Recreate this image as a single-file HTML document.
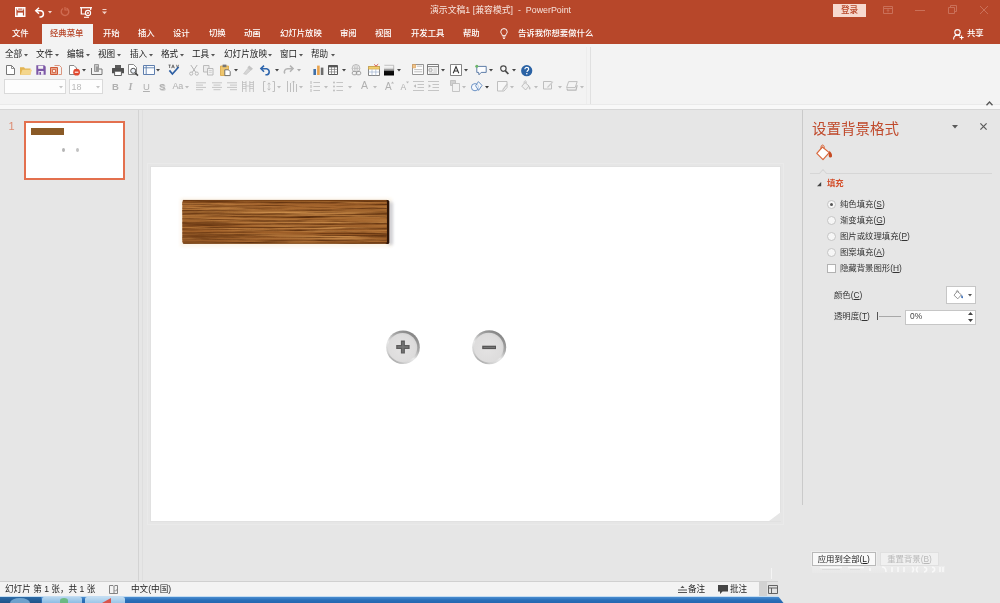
<!DOCTYPE html>
<html><head><meta charset="utf-8"><title>PowerPoint</title>
<style>
*{box-sizing:border-box;margin:0;padding:0}
html,body{width:1000px;height:603px;overflow:hidden}
body{position:relative;background:#e6e6e6;font-family:"Liberation Sans","Noto Sans CJK SC",sans-serif;font-size:8.5px;color:#333}
#root{position:absolute;left:0;top:0;width:1000px;height:603px;will-change:transform}
.abs{position:absolute}
svg{overflow:visible}
#title{left:0;top:0;width:1000px;height:44px;background:#b7472a}
.t{position:absolute;white-space:nowrap}
.tab{position:absolute;top:24px;height:20px;line-height:19px;font-size:8.4px;color:#fff;white-space:nowrap;font-weight:500}
#ribbon{left:0;top:44px;width:1000px;height:66px;background:linear-gradient(#f3f3f3 0 60.4px,#eaeaea 60.4px 61.2px,#f8f8f8 61.2px 65px);border-bottom:1px solid #d6d6d6}
.menu{position:absolute;top:49px;font-size:8.6px;line-height:11px;color:#1c1c1c;white-space:nowrap}
#left{left:0;top:110px;width:139px;height:471px;background:#e6e6e6;border-right:1px solid #d3d3d3;box-shadow:3px 0 0 -0px #e6e6e6, 4px 0 0 0 #dedede}
#slide{left:150.8px;top:166.8px;width:629.6px;height:354px;background:#fff;box-shadow:0 0 0 1px #e1e1e1, 0 0 0 3px #e6e6e6, 0 0 0 4px #eaeaea}
#rpane{left:803px;top:110px;width:197px;height:493px;background:#e6e6e6}
#status{left:0;top:581px;width:778px;height:15px;background:#f3f3f3;border-top:1px solid #d0d0d0}
#taskbar{left:0;top:596px;width:784px;height:7px;background:linear-gradient(#c4ddf2 0 1px,#4b8ed0 1px,#2a6fb9 4px,#2467b0);clip-path:polygon(0 0,778px 0,783.5px 100%,0 100%)}
.opt{position:absolute;left:840px;font-size:8.4px;line-height:11px;color:#333;white-space:nowrap}
.opt u,.lbl u,.btn u{text-decoration:underline;text-underline-offset:1px}
.radio{position:absolute;left:827px;width:9px;height:9px;border-radius:50%;border:1px solid #c4c4c4;background:#f6f6f6}
.lbl{position:absolute;font-size:8.4px;line-height:11px;color:#333;white-space:nowrap}
.btn{position:absolute;font-size:8.4px;line-height:13px;text-align:center;white-space:nowrap;border:1px solid #b4b4b4;background:#f6f6f6;color:#222}
</style></head><body>
<div id="root">
<div id="title" class="abs">
<div class="t" style="left:430px;top:5px;font-size:8.85px;line-height:11px;color:#f7e3dc">演示文稿1 [兼容模式]&nbsp; -&nbsp; PowerPoint</div>
<div class="t" style="left:833px;top:4px;width:33px;height:13px;background:#f7d9cf;color:#b7472a;font-size:8.6px;line-height:12.5px;text-align:center;font-weight:500">登录</div>
</div>
<svg class="abs" style="left:15px;top:7px" width="11" height="10" viewBox="0 0 11 10" ><path d="M0.7 0.7h9.1v8.6h-9.1z" fill="none" stroke="#fff" stroke-width="1.4"/><path d="M2.6 5.6h5.3v3.6h-5.3z" fill="#fff"/><path d="M2.6 0.7h5.3v2.4h-5.3z" fill="none" stroke="#fff" stroke-width="1"/></svg>
<svg class="abs" style="left:35px;top:7px" width="11" height="10" viewBox="0 0 11 10" ><path d="M4 0.8L0.8 3.8L4 6.8" fill="none" stroke="#fff" stroke-width="1.5"/><path d="M1 3.8h5a3.2 3.2 0 0 1 0 6.2h-1.5" fill="none" stroke="#fff" stroke-width="1.5"/></svg>
<svg class="abs" style="left:48px;top:11px" width="4" height="2.4" viewBox="0 0 4 2.4" ><path d="M0 0h4L2 2.4z" fill="#f3d7cf"/></svg>
<svg class="abs" style="left:60px;top:7px" width="10" height="10" viewBox="0 0 10 10" ><path d="M6.5 1.2a3.8 3.8 0 1 1-3.6 0.3" fill="none" stroke="#cf6c52" stroke-width="1.4"/><path d="M5 0v3h3" fill="none" stroke="#cf6c52" stroke-width="1.2"/></svg>
<svg class="abs" style="left:80px;top:7px" width="12" height="11" viewBox="0 0 12 11" ><path d="M0 0.7h12" stroke="#fff" stroke-width="1.3"/><path d="M1.3 1v6h5" fill="none" stroke="#fff" stroke-width="1.2"/><path d="M10.7 1v2" stroke="#fff" stroke-width="1.2"/><circle cx="8" cy="6" r="2.6" fill="none" stroke="#fff" stroke-width="1.1"/><circle cx="8" cy="6" r="0.9" fill="#fff"/><path d="M4 10.3h5" stroke="#fff" stroke-width="1.1"/></svg>
<svg class="abs" style="left:102px;top:9px" width="5" height="6" viewBox="0 0 5 6" ><path d="M0.5 0.5h4" stroke="#f0cfc5" stroke-width="1"/><path d="M0 2.5h5L2.5 5.2z" fill="#f0cfc5"/></svg>
<svg class="abs" style="left:883px;top:6px" width="10" height="8" viewBox="0 0 10 8" ><path d="M0.5 0.5h9v7h-9z M0.5 2.5h9" fill="none" stroke="#ca7059" stroke-width="1"/><path d="M5 3.5v3M3.8 5L5 3.6L6.2 5" fill="none" stroke="#ca7059" stroke-width="0.8"/></svg>
<svg class="abs" style="left:915px;top:10px" width="10" height="1" viewBox="0 0 10 1" ><path d="M0 0.5h10" stroke="#ca7059" stroke-width="1"/></svg>
<svg class="abs" style="left:948px;top:5px" width="9" height="9" viewBox="0 0 9 9" ><path d="M0.5 2.5h6v6h-6z" fill="none" stroke="#ca7059" stroke-width="1"/><path d="M2.5 2.5v-2h6v6h-2" fill="none" stroke="#ca7059" stroke-width="1"/></svg>
<svg class="abs" style="left:980px;top:6px" width="8" height="8" viewBox="0 0 8 8" ><path d="M0 0L8 8M8 0L0 8" stroke="#ca7059" stroke-width="1"/></svg>
<div class="abs" style="left:42px;top:24px;width:51px;height:20px;background:#f3f3f3"></div>
<div class="tab" style="left:12px">文件</div>
<div class="tab" style="left:50px;color:#b7472a">经典菜单</div>
<div class="tab" style="left:103px">开始</div>
<div class="tab" style="left:138px">插入</div>
<div class="tab" style="left:173px">设计</div>
<div class="tab" style="left:209px">切换</div>
<div class="tab" style="left:244px">动画</div>
<div class="tab" style="left:280px">幻灯片放映</div>
<div class="tab" style="left:340px">审阅</div>
<div class="tab" style="left:375px">视图</div>
<div class="tab" style="left:411px">开发工具</div>
<div class="tab" style="left:463px">帮助</div>
<div class="tab" style="left:518px">告诉我你想要做什么</div>
<svg class="abs" style="left:500px;top:28px" width="8" height="11" viewBox="0 0 8 11" ><path d="M4 0.6a3.2 3.2 0 0 1 3.2 3.2c0 1.6-1.4 2.3-1.6 3.9h-3.2c-0.2-1.6-1.6-2.3-1.6-3.9a3.2 3.2 0 0 1 3.2-3.2z" fill="none" stroke="#fff" stroke-width="1"/><path d="M2.6 9h2.8M3 10.4h2" stroke="#fff" stroke-width="0.9"/></svg>
<svg class="abs" style="left:953px;top:29px" width="11" height="11" viewBox="0 0 11 11" ><circle cx="4.5" cy="3.3" r="2.7" fill="none" stroke="#fff" stroke-width="1.1"/><path d="M0.6 10.5c0-3 1.6-4.4 3.9-4.4c1.2 0 2 0.4 2.6 1" fill="none" stroke="#fff" stroke-width="1.1"/><path d="M8.6 6.5v4M6.6 8.5h4" stroke="#fff" stroke-width="1.1"/></svg>
<div class="tab" style="left:967px">共享</div>
<div id="ribbon" class="abs"></div>
<div class="menu" style="left:5px">全部</div>
<svg class="abs" style="left:24px;top:54px" width="4" height="2.4" viewBox="0 0 4 2.4" ><path d="M0 0h4L2 2.4z" fill="#555"/></svg>
<div class="menu" style="left:36px">文件</div>
<svg class="abs" style="left:55px;top:54px" width="4" height="2.4" viewBox="0 0 4 2.4" ><path d="M0 0h4L2 2.4z" fill="#555"/></svg>
<div class="menu" style="left:67px">编辑</div>
<svg class="abs" style="left:86px;top:54px" width="4" height="2.4" viewBox="0 0 4 2.4" ><path d="M0 0h4L2 2.4z" fill="#555"/></svg>
<div class="menu" style="left:98px">视图</div>
<svg class="abs" style="left:117px;top:54px" width="4" height="2.4" viewBox="0 0 4 2.4" ><path d="M0 0h4L2 2.4z" fill="#555"/></svg>
<div class="menu" style="left:130px">插入</div>
<svg class="abs" style="left:149px;top:54px" width="4" height="2.4" viewBox="0 0 4 2.4" ><path d="M0 0h4L2 2.4z" fill="#555"/></svg>
<div class="menu" style="left:161px">格式</div>
<svg class="abs" style="left:180px;top:54px" width="4" height="2.4" viewBox="0 0 4 2.4" ><path d="M0 0h4L2 2.4z" fill="#555"/></svg>
<div class="menu" style="left:192px">工具</div>
<svg class="abs" style="left:211px;top:54px" width="4" height="2.4" viewBox="0 0 4 2.4" ><path d="M0 0h4L2 2.4z" fill="#555"/></svg>
<div class="menu" style="left:224px">幻灯片放映</div>
<svg class="abs" style="left:268px;top:54px" width="4" height="2.4" viewBox="0 0 4 2.4" ><path d="M0 0h4L2 2.4z" fill="#555"/></svg>
<div class="menu" style="left:280px">窗口</div>
<svg class="abs" style="left:299px;top:54px" width="4" height="2.4" viewBox="0 0 4 2.4" ><path d="M0 0h4L2 2.4z" fill="#555"/></svg>
<div class="menu" style="left:311px">帮助</div>
<svg class="abs" style="left:331px;top:54px" width="4" height="2.4" viewBox="0 0 4 2.4" ><path d="M0 0h4L2 2.4z" fill="#555"/></svg>
<div class="abs" style="left:590px;top:47px;width:1px;height:57px;background:#e0e0e0"></div><div class="abs" style="left:586px;top:47px;width:1px;height:57px;background:#ededed"></div>
<svg class="abs" style="left:986px;top:101px" width="7" height="5" viewBox="0 0 7 5" ><path d="M0.5 4.2L3.5 1L6.5 4.2" fill="none" stroke="#555" stroke-width="1.3"/></svg>
<svg class="abs" style="left:6px;top:65px" width="9" height="10" viewBox="0 0 9 10"><path d="M0.5 0.5h5l3 3v6h-8z" fill="#fff" stroke="#777" stroke-width="1"/><path d="M5.5 0.5v3h3" fill="none" stroke="#777" stroke-width="0.8"/></svg>
<svg class="abs" style="left:20px;top:66px" width="12" height="9" viewBox="0 0 12 9"><path d="M0 1.2h4l1 1.2h5.5v6.4h-10.5z" fill="#e3b452"/><path d="M0.6 8.8l1.8-5h9.6l-1.8 5z" fill="#f4d68c"/></svg>
<svg class="abs" style="left:36px;top:65px" width="10" height="10" viewBox="0 0 10 10"><path d="M0.3 0.3h8l1.4 1.4v8h-9.4z" fill="#7c57a6"/><path d="M2.2 0.8h5v3h-5z" fill="#f3f3f3"/><path d="M2.4 6h5.2v3.8h-5.2z" fill="#efeaf5"/><path d="M3.4 7h1.6v2.8h-1.6z" fill="#7c57a6"/></svg>
<svg class="abs" style="left:50px;top:65px" width="12" height="10" viewBox="0 0 12 10"><path d="M0.5 2.5h7v7h-7z" fill="#e9a58c" stroke="#cf5a37" stroke-width="1"/><path d="M2.5 4.5h3v3h-3z" fill="#fbe9e2" stroke="#cf5a37" stroke-width="0.8"/><path d="M4.5 0.5h5l2 2v7h-3" fill="none" stroke="#d78a72" stroke-width="0.9"/></svg>
<svg class="abs" style="left:69px;top:65px" width="12" height="11" viewBox="0 0 12 11"><path d="M0.5 0.5h4.5l2.5 2.5v6.5h-7z" fill="#fff" stroke="#888" stroke-width="1"/><circle cx="7.6" cy="7.2" r="3.4" fill="#e0492f"/><path d="M5.8 7.2h3.6" stroke="#fff" stroke-width="1.1"/></svg>
<svg class="abs" style="left:82px;top:69px" width="4" height="2.4" viewBox="0 0 4 2.4"><path d="M0 0h4L2 2.4z" fill="#444"/></svg>
<svg class="abs" style="left:91px;top:64px" width="12" height="11" viewBox="0 0 12 11"><path d="M3.5 0.5h4v7h-4z" fill="#c9c9c9" stroke="#8a8a8a" stroke-width="0.8"/><path d="M0.5 4v6.5h10.5v-5.5h-3" fill="none" stroke="#777" stroke-width="1"/><path d="M5 2.5h2.6v5h-2.6z" fill="#9a9a9a"/></svg>
<svg class="abs" style="left:112px;top:65px" width="12" height="11" viewBox="0 0 12 11"><path d="M3 0h6v3h-6z" fill="#5c5c5c"/><path d="M0.3 3h11.4a0.8 0.8 0 0 1 0.3 0.6v4.6h-12v-4.6a0.8 0.8 0 0 1 0.3-0.6z" fill="#505050"/><path d="M2.6 6.2h6.8v4.3h-6.8z" fill="#fff" stroke="#505050" stroke-width="0.9"/></svg>
<svg class="abs" style="left:128px;top:64px" width="11" height="12" viewBox="0 0 11 12"><path d="M0.5 0.5h5l3 3v7h-8z" fill="#fff" stroke="#7a7a7a" stroke-width="0.9"/><circle cx="5.2" cy="6.8" r="2.5" fill="#eef3fa" stroke="#555" stroke-width="1"/><path d="M7 8.8l3 2.8" stroke="#444" stroke-width="1.5"/></svg>
<svg class="abs" style="left:143px;top:65px" width="12" height="10" viewBox="0 0 12 10"><path d="M0.5 0.5h11v9h-11z" fill="#fafcff" stroke="#5f7fae" stroke-width="1"/><path d="M0.5 2.8h11M3.2 0.5v9" stroke="#5f7fae" stroke-width="0.9"/></svg>
<svg class="abs" style="left:156px;top:69px" width="4" height="2.4" viewBox="0 0 4 2.4"><path d="M0 0h4L2 2.4z" fill="#444"/></svg>
<svg class="abs" style="left:168px;top:64px" width="12" height="12" viewBox="0 0 12 12"><path d="M0.5 1h2.2M1.6 1v3M5 0.8l-1.4 3.4M5 0.8l1.4 3.4M4.2 3h1.8" fill="none" stroke="#555" stroke-width="0.8"/><path d="M8.5 0.8l1 3.4l1-3.4" fill="none" stroke="#555" stroke-width="0.8"/><path d="M1.4 6.4l3 3.6l6.2-7" fill="none" stroke="#2d5fa3" stroke-width="1.7"/></svg>
<svg class="abs" style="left:189px;top:65px" width="10" height="11" viewBox="0 0 10 11"><path d="M1.8 0l5 7.4M8.2 0l-5 7.4" stroke="#b4b4b4" stroke-width="1"/><circle cx="2.2" cy="8.6" r="1.6" fill="none" stroke="#b4b4b4" stroke-width="0.9"/><circle cx="7.8" cy="8.6" r="1.6" fill="none" stroke="#b4b4b4" stroke-width="0.9"/></svg>
<svg class="abs" style="left:203px;top:65px" width="11" height="11" viewBox="0 0 11 11"><path d="M0.5 0.5h5.5v6.5h-5.5z" fill="#ececec" stroke="#b4b4b4" stroke-width="0.9"/><path d="M4.5 3.5h5.5v6.5h-5.5z" fill="#f2f2f2" stroke="#b4b4b4" stroke-width="0.9"/><path d="M5.8 5.5h3M5.8 7.3h3" stroke="#c2c2c2" stroke-width="0.7"/></svg>
<svg class="abs" style="left:220px;top:64px" width="11" height="12" viewBox="0 0 11 12"><path d="M0.5 2h8v9.5h-8z" fill="#efc66d" stroke="#d9a441" stroke-width="0.8"/><path d="M2.6 0.6h3.8v2.6h-3.8z" fill="#777"/><path d="M4.8 5.8h3.6l1.8 1.8v4h-5.4z" fill="#fff" stroke="#666" stroke-width="0.9"/></svg>
<svg class="abs" style="left:234px;top:69px" width="4" height="2.4" viewBox="0 0 4 2.4"><path d="M0 0h4L2 2.4z" fill="#444"/></svg>
<svg class="abs" style="left:243px;top:65px" width="11" height="10" viewBox="0 0 11 10"><path d="M6.2 0.6l3.8 3.2l-2 1.6l-3.6-3z" fill="#c4c4c4"/><path d="M5 3.2l2.6 2.2l-4.4 4l-2.6-0.6z" fill="#d6d6d6" stroke="#c0c0c0" stroke-width="0.6"/></svg>
<svg class="abs" style="left:260px;top:65px" width="12" height="10" viewBox="0 0 12 10"><path d="M4 0.6L0.9 3.6L4 6.8" fill="none" stroke="#2f66ad" stroke-width="1.6"/><path d="M1.2 3.7h5.4a3.2 3.2 0 0 1 0.6 6.1h-1.8" fill="none" stroke="#2f66ad" stroke-width="1.6"/></svg>
<svg class="abs" style="left:275px;top:69px" width="4" height="2.4" viewBox="0 0 4 2.4"><path d="M0 0h4L2 2.4z" fill="#444"/></svg>
<svg class="abs" style="left:283px;top:65px" width="11" height="10" viewBox="0 0 11 10"><path d="M7 0.6L10.1 3.6L7 6.8" fill="none" stroke="#b4b4b4" stroke-width="1.5"/><path d="M9.8 3.7h-5a3.2 3.2 0 0 0-3 4.8" fill="none" stroke="#b4b4b4" stroke-width="1.5"/></svg>
<svg class="abs" style="left:297px;top:69px" width="4" height="2.4" viewBox="0 0 4 2.4"><path d="M0 0h4L2 2.4z" fill="#aaa"/></svg>
<svg class="abs" style="left:313px;top:65px" width="11" height="10" viewBox="0 0 11 10"><path d="M0.4 4h2.6v6h-2.6z" fill="#3f6fa8"/><path d="M4.1 0.6h2.6v9.4h-2.6z" fill="#e8a24c"/><path d="M7.8 2.6h2.6v7.4h-2.6z" fill="#6d6d6d"/></svg>
<svg class="abs" style="left:328px;top:65px" width="10" height="10" viewBox="0 0 10 10"><path d="M0.5 0.5h9v9h-9z" fill="#fff" stroke="#555" stroke-width="1"/><path d="M0.5 1.5h9" stroke="#555" stroke-width="1.8"/><path d="M0.5 4.4h9M0.5 6.9h9M3.5 2v7.5M6.5 2v7.5" stroke="#777" stroke-width="0.7"/></svg>
<svg class="abs" style="left:341.5px;top:69px" width="4" height="2.4" viewBox="0 0 4 2.4"><path d="M0 0h4L2 2.4z" fill="#444"/></svg>
<svg class="abs" style="left:351px;top:64px" width="11" height="12" viewBox="0 0 11 12"><circle cx="5" cy="4.4" r="3.9" fill="#f0f0f0" stroke="#b4b4b4" stroke-width="0.9"/><path d="M1.2 4.4h7.6M5 0.5v7.8M2.8 1.4c1.2 2 1.2 4 0 6M7.2 1.4c-1.2 2-1.2 4 0 6" fill="none" stroke="#b4b4b4" stroke-width="0.6"/><rect x="1.2" y="7.4" width="4.6" height="3.4" rx="1.6" fill="#f3f3f3" stroke="#999" stroke-width="0.9"/><rect x="5.2" y="7.4" width="4.6" height="3.4" rx="1.6" fill="none" stroke="#999" stroke-width="0.9"/></svg>
<svg class="abs" style="left:368px;top:64px" width="12" height="12" viewBox="0 0 12 12"><path d="M0.5 2.5h11v9h-11z" fill="#fff" stroke="#777" stroke-width="0.9"/><path d="M0.5 2.5h11v2.6h-11z" fill="#f2cf6e" stroke="#d1a33a" stroke-width="0.6"/><path d="M0.5 8h11M4 5.2v6.3M7.8 5.2v6.3" stroke="#9db3cf" stroke-width="0.7"/><path d="M6.2 0.4l1.8 1.8l2.2-2" fill="none" stroke="#d9534a" stroke-width="1"/></svg>
<svg class="abs" style="left:384px;top:64.5px" width="10" height="10.5" viewBox="0 0 10 10.5"><defs><linearGradient id="bw" x1="0" y1="0" x2="0" y2="1"><stop offset="0" stop-color="#fff"/><stop offset="0.3" stop-color="#e6e6e6"/><stop offset="0.5" stop-color="#777"/><stop offset="0.62" stop-color="#111"/><stop offset="1" stop-color="#000"/></linearGradient></defs><path d="M0 0h10v10.5h-10z" fill="url(#bw)"/><path d="M0.3 0.3h9.4v5h-9.4" fill="none" stroke="#999" stroke-width="0.6"/></svg>
<svg class="abs" style="left:397px;top:69px" width="4" height="2.4" viewBox="0 0 4 2.4"><path d="M0 0h4L2 2.4z" fill="#444"/></svg>
<svg class="abs" style="left:412px;top:64px" width="12" height="11" viewBox="0 0 12 11"><path d="M0.5 0.5h11v10h-11z" fill="#fdfdfd" stroke="#8a8a8a" stroke-width="0.9"/><path d="M0.5 0.5h3v3.4h-3z" fill="#f1c489" stroke="#d99a52" stroke-width="0.6"/><path d="M4.8 2.2h5.4M2.2 5.6h8M2.2 7.8h8" stroke="#b0b0b0" stroke-width="0.8"/></svg>
<svg class="abs" style="left:427px;top:64px" width="12" height="11" viewBox="0 0 12 11"><path d="M0.5 0.5h11v10h-11z" fill="#fdfdfd" stroke="#6e6e6e" stroke-width="0.9"/><path d="M0.5 2.6h11" stroke="#6e6e6e" stroke-width="0.9"/><path d="M2 4.8h3v2.4h-3z" fill="none" stroke="#888" stroke-width="0.7"/><path d="M6.4 5h3.8M6.4 7h3.8M2 9h8" stroke="#aaa" stroke-width="0.7"/></svg>
<svg class="abs" style="left:440.5px;top:69px" width="4" height="2.4" viewBox="0 0 4 2.4"><path d="M0 0h4L2 2.4z" fill="#444"/></svg>
<svg class="abs" style="left:450px;top:64px" width="12" height="12" viewBox="0 0 12 12"><path d="M0.5 0.5h11v11h-11z" fill="#fff" stroke="#777" stroke-width="0.9"/><path d="M3.2 9.2l2.8-6.6l2.8 6.6M4.2 7h3.6" fill="none" stroke="#333" stroke-width="1.1"/></svg>
<svg class="abs" style="left:464px;top:69px" width="4" height="2.4" viewBox="0 0 4 2.4"><path d="M0 0h4L2 2.4z" fill="#444"/></svg>
<svg class="abs" style="left:475px;top:64px" width="12" height="12" viewBox="0 0 12 12"><path d="M1.8 2.4h9.4v6h-5l-2.2 2.4l-0.4-2.4h-1.8z" fill="#fbfcfe" stroke="#4d6f9e" stroke-width="0.9"/><circle cx="1.8" cy="2.2" r="1.5" fill="#6cb56a"/></svg>
<svg class="abs" style="left:489px;top:69px" width="4" height="2.4" viewBox="0 0 4 2.4"><path d="M0 0h4L2 2.4z" fill="#444"/></svg>
<svg class="abs" style="left:499.5px;top:65px" width="9" height="10" viewBox="0 0 9 10"><circle cx="3.4" cy="3.6" r="2.7" fill="#f7f7f7" stroke="#4a4a4a" stroke-width="1.2"/><path d="M5.4 5.8l3 3.2" stroke="#4a4a4a" stroke-width="1.7"/></svg>
<svg class="abs" style="left:512px;top:69px" width="4" height="2.4" viewBox="0 0 4 2.4"><path d="M0 0h4L2 2.4z" fill="#444"/></svg>
<svg class="abs" style="left:521px;top:64.5px" width="11.5" height="11.5" viewBox="0 0 11.5 11.5"><circle cx="5.7" cy="5.7" r="5.6" fill="#2a62a4"/><path d="M3.9 4.3c0-1.3 0.9-1.9 1.9-1.9s1.9 0.6 1.9 1.7c0 1.3-1.7 1.4-1.8 2.8" fill="none" stroke="#fff" stroke-width="1.2"/><circle cx="5.8" cy="8.7" r="0.8" fill="#fff"/></svg>
<div class="abs" style="left:3.5px;top:79px;width:62px;height:15px;background:#fdfdfd;border:1px solid #dadada"></div>
<svg class="abs" style="left:58.5px;top:85.5px" width="4" height="2.4" viewBox="0 0 4 2.4"><path d="M0 0h4L2 2.4z" fill="#c4c4c4"/></svg>
<div class="abs" style="left:69px;top:79px;width:34px;height:15px;background:#fdfdfd;border:1px solid #dadada"></div>
<div class="t" style="left:71.5px;top:81.5px;font-size:9px;line-height:10px;color:#b9b9b9">18</div>
<svg class="abs" style="left:96px;top:85.5px" width="4" height="2.4" viewBox="0 0 4 2.4"><path d="M0 0h4L2 2.4z" fill="#c4c4c4"/></svg>
<div class="t" style="left:112px;top:80.5px;font-size:9.5px;line-height:11px;color:#b0b0b0;font-weight:bold">B</div>
<div class="t" style="left:128.5px;top:80.5px;font-size:9.5px;line-height:11px;color:#b0b0b0;font-style:italic;font-family:'Liberation Serif',serif;font-weight:bold;font-size:10px">I</div>
<div class="t" style="left:143px;top:80.5px;font-size:9.5px;line-height:11px;color:#b0b0b0;text-decoration:underline">U</div>
<div class="t" style="left:159px;top:80.5px;font-size:9.5px;line-height:11px;color:#b0b0b0;font-weight:bold;text-shadow:0.8px 0.8px 0 #d0d0d0">S</div>
<div class="t" style="left:172.5px;top:80.5px;font-size:9.5px;line-height:11px;color:#b0b0b0;font-size:9px;letter-spacing:-0.3px">Aa</div>
<svg class="abs" style="left:185px;top:85.5px" width="4" height="2.4" viewBox="0 0 4 2.4"><path d="M0 0h4L2 2.4z" fill="#bdbdbd"/></svg>
<svg class="abs" style="left:196px;top:82px" width="10" height="10" viewBox="0 0 10 10"><path d="M0 0.8h10M0 3.0999999999999996h7M0 5.3999999999999995h10M0 7.699999999999999h7" stroke="#b9b9b9" stroke-width="0.8"/></svg>
<svg class="abs" style="left:211.5px;top:82px" width="10" height="10" viewBox="0 0 10 10"><path d="M0.0 0.8h10M1.5 3.0999999999999996h7M0.0 5.3999999999999995h10M1.5 7.699999999999999h7" stroke="#b9b9b9" stroke-width="0.8"/></svg>
<svg class="abs" style="left:227px;top:82px" width="10" height="10" viewBox="0 0 10 10"><path d="M0 0.8h10M3 3.0999999999999996h7M0 5.3999999999999995h10M3 7.699999999999999h7" stroke="#b9b9b9" stroke-width="0.8"/></svg>
<svg class="abs" style="left:242px;top:81px" width="12" height="11" viewBox="0 0 12 11"><path d="M0.5 0v11M4 0v11M7.8 0v11M11.4 0v11" stroke="#b9b9b9" stroke-width="0.8"/><path d="M0.5 1.5h3.5M0.5 3.5h3.5M0.5 5.5h3.5M0.5 7.5h3.5M7.8 1.5h3.6M7.8 3.5h3.6M7.8 5.5h3.6M7.8 7.5h3.6M4 5h3.8" stroke="#bcbcbc" stroke-width="0.7"/></svg>
<svg class="abs" style="left:263px;top:81px" width="12" height="11" viewBox="0 0 12 11"><path d="M2.5 0.5h-2v10h2M9.5 0.5h2v10h-2" fill="none" stroke="#b9b9b9" stroke-width="0.9"/><path d="M6 2v7M4.6 3.4L6 1.8l1.4 1.6M4.6 7.6L6 9.2l1.4-1.6" fill="none" stroke="#b9b9b9" stroke-width="0.8"/></svg>
<svg class="abs" style="left:277px;top:85.5px" width="4" height="2.4" viewBox="0 0 4 2.4"><path d="M0 0h4L2 2.4z" fill="#bdbdbd"/></svg>
<svg class="abs" style="left:286.5px;top:81px" width="10" height="11" viewBox="0 0 10 11"><path d="M0.5 0v11M3.5 2v9M6.5 0v11M9.5 3v8" stroke="#b9b9b9" stroke-width="0.9"/><path d="M5 1.5l1.5-1.5l1.5 1.5" fill="none" stroke="#b9b9b9" stroke-width="0.7"/></svg>
<svg class="abs" style="left:299px;top:85.5px" width="4" height="2.4" viewBox="0 0 4 2.4"><path d="M0 0h4L2 2.4z" fill="#bdbdbd"/></svg>
<svg class="abs" style="left:310px;top:81px" width="10" height="11" viewBox="0 0 10 11"><path d="M3.4 1.5h6.6M3.4 5.5h6.6M3.4 9.5h6.6" stroke="#b9b9b9" stroke-width="0.8"/><path d="M1 0v3M1 4v3M1 8v3" stroke="#b4b4b4" stroke-width="0.9"/></svg>
<svg class="abs" style="left:324px;top:85.5px" width="4" height="2.4" viewBox="0 0 4 2.4"><path d="M0 0h4L2 2.4z" fill="#bdbdbd"/></svg>
<svg class="abs" style="left:333px;top:81px" width="10" height="11" viewBox="0 0 10 11"><path d="M3.4 1.5h6.6M3.4 5.5h6.6M3.4 9.5h6.6" stroke="#b9b9b9" stroke-width="0.8"/><circle cx="1" cy="1.5" r="0.9" fill="#b9b9b9"/><circle cx="1" cy="5.5" r="0.9" fill="#b9b9b9"/><circle cx="1" cy="9.5" r="0.9" fill="#b9b9b9"/></svg>
<svg class="abs" style="left:347.5px;top:85.5px" width="4" height="2.4" viewBox="0 0 4 2.4"><path d="M0 0h4L2 2.4z" fill="#bdbdbd"/></svg>
<div class="t" style="left:361px;top:80px;font-size:9.5px;line-height:11px;color:#b0b0b0;font-size:10.5px">A</div>
<svg class="abs" style="left:373px;top:85.5px" width="4" height="2.4" viewBox="0 0 4 2.4"><path d="M0 0h4L2 2.4z" fill="#bdbdbd"/></svg>
<div class="t" style="left:385px;top:80.5px;font-size:9.5px;line-height:11px;color:#b0b0b0;font-size:10px">A</div>
<svg class="abs" style="left:391px;top:81px" width="3" height="3" viewBox="0 0 3 3"><path d="M0 2.5L1.5 0.5L3 2.5z" fill="#b9b9b9"/></svg>
<div class="t" style="left:400.5px;top:81.5px;font-size:9.5px;line-height:11px;color:#b0b0b0;font-size:8.5px">A</div>
<svg class="abs" style="left:406px;top:81px" width="3" height="3" viewBox="0 0 3 3"><path d="M0 0.5L1.5 2.5L3 0.5z" fill="#b9b9b9"/></svg>
<svg class="abs" style="left:412.5px;top:81px" width="11" height="11" viewBox="0 0 11 11"><path d="M0 0.5h11M4.5 3.5h6.5M4.5 6.5h6.5M0 9.5h11" stroke="#b9b9b9" stroke-width="0.8"/><path d="M3 3.2v3.6L0.6 5z" fill="#b9b9b9"/></svg>
<svg class="abs" style="left:427.5px;top:81px" width="11" height="11" viewBox="0 0 11 11"><path d="M0 0.5h11M4.5 3.5h6.5M4.5 6.5h6.5M0 9.5h11" stroke="#b9b9b9" stroke-width="0.8"/><path d="M0.6 3.2v3.6L3 5z" fill="#b9b9b9"/></svg>
<svg class="abs" style="left:450px;top:80px" width="10" height="12" viewBox="0 0 10 12"><path d="M0.5 0.5h5v5h-5z" fill="#d0d0d0" stroke="#b9b9b9" stroke-width="0.8"/><path d="M2.5 3.5h7v8h-7z" fill="#f1f1f1" stroke="#b9b9b9" stroke-width="0.8"/></svg>
<svg class="abs" style="left:462px;top:85.5px" width="4" height="2.4" viewBox="0 0 4 2.4"><path d="M0 0h4L2 2.4z" fill="#bdbdbd"/></svg>
<svg class="abs" style="left:471px;top:80.5px" width="12" height="12" viewBox="0 0 12 12"><circle cx="4" cy="6.2" r="3.6" fill="#f4f8fd" stroke="#5b86bd" stroke-width="0.9"/><path d="M7.4 0.6l3.6 3.8l-3.4 5l-3-4.6z" fill="#f7fafe" fill-opacity=".6" stroke="#5b86bd" stroke-width="0.9" stroke-linejoin="round"/></svg>
<svg class="abs" style="left:485px;top:85.5px" width="4" height="2.4" viewBox="0 0 4 2.4"><path d="M0 0h4L2 2.4z" fill="#333"/></svg>
<svg class="abs" style="left:497px;top:81px" width="12" height="11" viewBox="0 0 12 11"><path d="M0.5 0.5h9.5v6l-3 3.5h-6.5z" fill="#f7f7f7" stroke="#b9b9b9" stroke-width="0.9"/><path d="M10.8 3.2L6.6 8.8l-1.6 1.4l0.6-2.2l4.2-5.4z" fill="#c5c5c5"/></svg>
<svg class="abs" style="left:510px;top:85.5px" width="4" height="2.4" viewBox="0 0 4 2.4"><path d="M0 0h4L2 2.4z" fill="#bdbdbd"/></svg>
<svg class="abs" style="left:521px;top:80px" width="10" height="12" viewBox="0 0 10 12"><path d="M4 2.5L0.8 6.2L4.6 10L8 6z" fill="#efefef" stroke="#b9b9b9" stroke-width="0.9"/><path d="M3.2 3.5c-0.4-1.8 0.4-2.8 1.2-2.7c0.8 0.2 1 1.2 0.9 2.2" fill="none" stroke="#b9b9b9" stroke-width="0.8"/><path d="M8.2 6c0.9 0.8 1.5 1.9 1.3 2.9c-0.4 0.9-1.6 0.6-1.7-0.2z" fill="#c2c2c2"/></svg>
<svg class="abs" style="left:534px;top:85.5px" width="4" height="2.4" viewBox="0 0 4 2.4"><path d="M0 0h4L2 2.4z" fill="#bdbdbd"/></svg>
<svg class="abs" style="left:543px;top:80.5px" width="11" height="10" viewBox="0 0 11 10"><path d="M0.5 0.5h8v7.5h-8z" fill="none" stroke="#b9b9b9" stroke-width="0.9"/><path d="M10.4 1L5.4 6.4l-1.6 0.8l0.6-1.8l5-5.2z" fill="#c5c5c5" stroke="#f3f3f3" stroke-width="0.4"/></svg>
<svg class="abs" style="left:558px;top:85.5px" width="4" height="2.4" viewBox="0 0 4 2.4"><path d="M0 0h4L2 2.4z" fill="#bdbdbd"/></svg>
<svg class="abs" style="left:566px;top:81px" width="12" height="10" viewBox="0 0 12 10"><path d="M2.6 0.6h8.6l-2 6h-8.6z" fill="#f4f4f4" stroke="#b9b9b9" stroke-width="0.9"/><path d="M0.8 7.4l0.8 1.8h8.4l1.2-5" fill="none" stroke="#b9b9b9" stroke-width="1.2"/></svg>
<svg class="abs" style="left:580px;top:85.5px" width="4" height="2.4" viewBox="0 0 4 2.4"><path d="M0 0h4L2 2.4z" fill="#bdbdbd"/></svg>
<div id="left" class="abs"></div>
<div class="t" style="left:8.5px;top:120.5px;font-size:11px;line-height:11px;color:#dd8a70">1</div>
<div class="abs" style="left:24px;top:121px;width:101px;height:59px;background:#fff;border:2px solid #e3704e"></div>
<div class="abs" style="left:30.5px;top:128px;width:33px;height:7px;background:#8a5a26"></div>
<div class="abs" style="left:62px;top:148px;width:3.4px;height:4.4px;border-radius:50%;background:#b4b4b4;filter:blur(0.7px)"></div>
<div class="abs" style="left:75.5px;top:148px;width:3.4px;height:4.4px;border-radius:50%;background:#c2c2c2;filter:blur(0.7px)"></div>
<div id="slide" class="abs"></div>
<svg class="abs" style="left:151px;top:167px" width="630" height="354" viewBox="151 167 630 354">
<defs>
<filter id="grain" x="0" y="0" width="100%" height="100%" color-interpolation-filters="sRGB">
<feTurbulence type="fractalNoise" baseFrequency="0.012 0.55" numOctaves="5" seed="11" result="n"/>
<feColorMatrix in="n" type="matrix" values="0 0 0 0 0.36  0 0 0 0 0.18  0 0 0 0 0.05  2.6 0 0 0 -1.12" result="d"/>
<feComposite in="d" in2="SourceGraphic" operator="in" result="dd"/>
<feTurbulence type="fractalNoise" baseFrequency="0.008 0.5" numOctaves="2" seed="23" result="m"/>
<feColorMatrix in="m" type="matrix" values="0 0 0 0 0.80  0 0 0 0 0.56  0 0 0 0 0.30  0 2.6 0 0 -1.08" result="l"/>
<feComposite in="l" in2="SourceGraphic" operator="in" result="ll"/>
<feMerge><feMergeNode in="SourceGraphic"/><feMergeNode in="ll"/><feMergeNode in="dd"/></feMerge>
</filter>
<linearGradient id="woodv" x1="0" y1="0" x2="0" y2="1">
<stop offset="0" stop-color="#74400f"/><stop offset="0.07" stop-color="#a0602a"/><stop offset="0.2" stop-color="#a96a30"/>
<stop offset="0.3" stop-color="#955c28"/><stop offset="0.42" stop-color="#a5672e"/><stop offset="0.55" stop-color="#9b5e29"/>
<stop offset="0.7" stop-color="#a3622a"/><stop offset="0.82" stop-color="#915624"/><stop offset="0.95" stop-color="#9b5b26"/><stop offset="1" stop-color="#74400f"/>
</linearGradient>
<radialGradient id="face" cx="0.45" cy="0.55" r="0.6">
<stop offset="0" stop-color="#e4e3e3"/><stop offset="0.8" stop-color="#dddcdc"/><stop offset="1" stop-color="#d2d2d2"/>
</radialGradient>
<linearGradient id="rim" x1="0.8" y1="0.05" x2="0.2" y2="0.95">
<stop offset="0" stop-color="#808080"/><stop offset="0.35" stop-color="#a9a9a9"/><stop offset="0.6" stop-color="#e8e8e8"/><stop offset="0.85" stop-color="#d0d0d0"/><stop offset="1" stop-color="#9c9c9c"/>
</linearGradient>
<filter id="soft" x="-10%" y="-10%" width="120%" height="120%"><feGaussianBlur stdDeviation="0.45"/></filter>
<filter id="glow" x="-100%" y="-40%" width="300%" height="180%"><feGaussianBlur stdDeviation="1.6"/></filter>
</defs>
<!-- slide corner fold -->
<path d="M769 521L781 512V521z" fill="#e6e6e6"/>
<!-- plank -->
<rect x="180" y="198" width="212" height="49" rx="2" fill="#fbf3e6" filter="url(#glow)" opacity=".8"/>
<rect x="388" y="202" width="5" height="43" rx="1.5" fill="#b9bcc6" filter="url(#glow)" opacity=".65"/>
<rect x="385" y="200" width="4.3" height="44" rx="1.6" fill="#2e1507"/>
<rect x="182.3" y="200" width="204.6" height="43.8" rx="2.4" fill="url(#woodv)" filter="url(#grain)"/>
<path d="M183 200.4h204" stroke="#6a3510" stroke-width="0.9" opacity=".8"/>
<path d="M183 243.5h204" stroke="#6a3510" stroke-width="0.7" opacity=".6"/>
<!-- screws -->
<g filter="url(#soft)">
<circle cx="403" cy="347.2" r="16.8" fill="url(#rim)"/>
<circle cx="402.6" cy="347.5" r="14.6" fill="url(#face)"/>
<path d="M396.2 344.9h4.7v-4.3h4v4.3h4.7v4.2h-4.7v4.4h-4v-4.4h-4.7z" fill="#5d5c5c"/>
<path d="M397.5 347h10.8M402.9 342v10.5" stroke="#777" stroke-width="1.4"/>
<circle cx="489.2" cy="347.2" r="17" fill="url(#rim)"/>
<circle cx="488.8" cy="347.5" r="14.8" fill="url(#face)"/>
<rect x="482.2" y="345.7" width="13.8" height="3.4" fill="#565555"/>
<path d="M483.5 347.4h11.5" stroke="#7a7a7a" stroke-width="1"/>
</g>
</svg>

<div id="rpane" class="abs"></div><div class="abs" style="left:802.3px;top:110px;width:1px;height:395px;background:#cacaca"></div>
<div class="t" style="left:812px;top:120px;font-size:14.5px;line-height:18px;color:#c04a2c;font-weight:400">设置背景格式</div>
<svg class="abs" style="left:952px;top:124.5px" width="6" height="3.4" viewBox="0 0 6 3.4" ><path d="M0 0h6L3 3.4z" fill="#5a5a5a"/></svg>
<svg class="abs" style="left:979.5px;top:122.5px" width="7" height="7" viewBox="0 0 7 7" ><path d="M0.4 0.4L6.6 6.6M6.6 0.4L0.4 6.6" stroke="#5a5a5a" stroke-width="1.2"/></svg>
<svg class="abs" style="left:816px;top:144px" width="17" height="17" viewBox="0 0 17 17" ><path d="M6.4 3L0.8 9.4L7 15.6L13.2 8.6z" fill="#fff" stroke="#d9683c" stroke-width="1.2" stroke-linejoin="round"/><path d="M5.2 5c-0.8-2.6 0.4-4.2 1.6-4c1.2 0.2 1.6 1.8 1.4 3.4" fill="none" stroke="#d9683c" stroke-width="1"/><path d="M13.4 6.8c1.6 1.4 3 3.6 2.6 5.6c-0.6 1.6-2.8 1.4-3.2-0.2c-0.3-1.4 0.4-3 0.6-5.4z" fill="#c54a22"/></svg>
<svg class="abs" style="left:810px;top:168px" width="182" height="6" viewBox="0 0 182 6" ><path d="M0 5.5h9.5l3.5-4l3.5 4h165.5" fill="none" stroke="#d6d6d6" stroke-width="1.1"/></svg>
<svg class="abs" style="left:817.3px;top:181.5px" width="4.2" height="4.2" viewBox="0 0 4.2 4.2" ><path d="M4.2 0v4.2h-4.2z" fill="#444"/></svg>
<div class="t" style="left:827px;top:178px;font-size:8.4px;line-height:11px;color:#d4502c;font-weight:bold">填充</div>
<div class="radio" style="top:200px"></div>
<div class="abs" style="left:830px;top:203px;width:3px;height:3px;border-radius:50%;background:#555"></div>
<div class="opt" style="top:199px">纯色填充(<u>S</u>)</div>
<div class="radio" style="top:216px"></div>
<div class="opt" style="top:215px">渐变填充(<u>G</u>)</div>
<div class="radio" style="top:231.8px"></div>
<div class="opt" style="top:230.8px">图片或纹理填充(<u>P</u>)</div>
<div class="radio" style="top:248px"></div>
<div class="opt" style="top:247px">图案填充(<u>A</u>)</div>
<div class="abs" style="left:827px;top:264px;width:9px;height:9px;background:#fdfdfd;border:1px solid #b2b2b2"></div>
<div class="opt" style="top:263px">隐藏背景图形(<u>H</u>)</div>
<div class="lbl" style="left:834px;top:289.5px">颜色(<u>C</u>)</div>
<div class="abs" style="left:946px;top:286px;width:30px;height:18px;background:#fff;border:1px solid #c6c6c6"></div>
<svg class="abs" style="left:953px;top:290px" width="12" height="10" viewBox="0 0 12 10" ><path d="M4.2 1.4L1 5.2L4.8 8.8L8.4 4.8z" fill="#fff" stroke="#8a8a8a" stroke-width="0.9"/><path d="M3.4 2.4c-0.3-1.4 0.4-2.2 1.2-2c0.7 0.2 0.9 1 0.8 1.8" fill="none" stroke="#8a8a8a" stroke-width="0.8"/><path d="M8.6 4.8c0.9 0.8 1.6 1.9 1.4 2.9c-0.4 0.9-1.6 0.6-1.8-0.2c-0.1-0.8 0.3-1.5 0.4-2.7z" fill="#3b6db5"/></svg>
<svg class="abs" style="left:968px;top:294px" width="4" height="2.4" viewBox="0 0 4 2.4" ><path d="M0 0h4L2 2.4z" fill="#555"/></svg>
<div class="lbl" style="left:834px;top:310.5px">透明度(<u>T</u>)</div>
<div class="abs" style="left:877px;top:312px;width:1px;height:8px;background:#555"></div>
<div class="abs" style="left:879px;top:316px;width:22px;height:1px;background:#a8a8a8"></div>
<div class="abs" style="left:905px;top:309.5px;width:71px;height:15px;background:#fff;border:1px solid #c6c6c6"></div>
<div class="lbl" style="left:910px;top:311px;color:#444">0%</div>
<svg class="abs" style="left:968px;top:312px" width="5" height="10" viewBox="0 0 5 10" ><path d="M0 3L2.5 0L5 3z M0 7L2.5 10L5 7z" fill="#444"/></svg>
<div class="btn" style="left:811.5px;top:551.5px;width:64.5px;height:14.5px;line-height:12.5px;background:#f9f9f9;border-color:#b9b9b9;box-shadow:0 0 0 1px #ededed">应用到全部(<u>L</u>)</div>
<div class="btn" style="left:880px;top:551.5px;width:59px;height:14.5px;line-height:12.5px;color:#b9b9b9;border-color:#e0e0e0;background:#f0f0f0">重置背景(<u>B</u>)</div>
<div class="abs" style="left:812px;top:566px;width:133px;height:7px;background:linear-gradient(#ececec,#e8e8e8)"></div>
<svg class="abs" style="left:812px;top:566px" width="133" height="7" viewBox="0 0 133 7" ><path d="M8 1.5h22M36 1.5h16M58 2v3M70 1c3 0 4 2 4 5M80 1v5M86 1v5M92 1v5M100 1c2 1 2 4 0 5M106 1c-2 1-2 4 0 5M112 1.5c3-1 4 4 0 4.500M120 1.500c3-1 4 4 0 4.500M128 1v5M131 1v5" fill="none" stroke="#f8f8f8" stroke-width="1.6"/><path d="M10 3.500h18M38 3.500h10" stroke="#d9d9d9" stroke-width="0.8"/></svg>
<div id="status" class="abs"></div>
<div class="t" style="left:5px;top:584px;font-size:8.6px;line-height:11px;color:#262626">幻灯片 第 1 张，共 1 张</div>
<svg class="abs" style="left:109px;top:585px" width="9" height="9" viewBox="0 0 9 9" ><path d="M0.5 0.5h3.5l1 1v7h-4.5z M5 1.5l0.8-1h2.7v8h-3.5" fill="none" stroke="#777" stroke-width="0.9"/><path d="M5.6 5.2l1 1l1.8-2.2" fill="none" stroke="#777" stroke-width="0.8"/></svg>
<div class="t" style="left:131px;top:584px;font-size:8.6px;line-height:11px;color:#262626">中文(中国)</div>
<svg class="abs" style="left:678px;top:585px" width="9" height="8" viewBox="0 0 9 8" ><path d="M0 7.5h9M0 5h9" stroke="#555" stroke-width="1"/><path d="M2.5 3L4.5 0.8L6.5 3z" fill="#555"/></svg>
<div class="t" style="left:688px;top:584px;font-size:8.6px;line-height:11px;color:#262626">备注</div>
<svg class="abs" style="left:718px;top:585px" width="10" height="9" viewBox="0 0 10 9" ><path d="M0 0h10v6.5h-5.5l-2.5 2.5v-2.5h-2z" fill="#444"/></svg>
<div class="t" style="left:730px;top:584px;font-size:8.6px;line-height:11px;color:#262626">批注</div>
<div class="abs" style="left:759px;top:582px;width:8px;height:14px;background:#d2d2d2"></div><div class="abs" style="left:767px;top:582px;width:11px;height:14px;background:#e2e2e2"></div><div class="abs" style="left:771px;top:568px;width:1px;height:11px;background:#f4f4f4"></div>
<svg class="abs" style="left:767.5px;top:584.5px" width="9" height="8.5" viewBox="0 0 9 8.5" ><path d="M0.5 0.5h9v8h-9z M0.5 3h9 M3.5 3v5.5" fill="none" stroke="#555" stroke-width="0.9"/></svg>
<div id="taskbar" class="abs"></div>
<div class="abs" style="left:0;top:597px;width:41px;height:6px;background:linear-gradient(#2b6aa6,#1e5288)"></div>
<div class="abs" style="left:10px;top:598px;width:20px;height:10px;border-radius:50%;background:#8fc0e6;opacity:.7"></div>
<div class="abs" style="left:42px;top:597px;width:40px;height:6px;background:linear-gradient(#b8d7ef,#8dbde4);border-radius:2px 2px 0 0"></div>
<div class="abs" style="left:85px;top:597px;width:40px;height:6px;background:linear-gradient(#c3ddf1,#9cc6e8);border-radius:2px 2px 0 0"></div>
<div class="abs" style="left:60px;top:598px;width:8px;height:5px;background:#5fb66a;border-radius:50% 50% 0 0;opacity:.8"></div>
<div class="abs" style="left:102px;top:598px;width:9px;height:5px;background:#d9534a;clip-path:polygon(0 100%,100% 0,100% 100%)"></div>
</div>
</body></html>
